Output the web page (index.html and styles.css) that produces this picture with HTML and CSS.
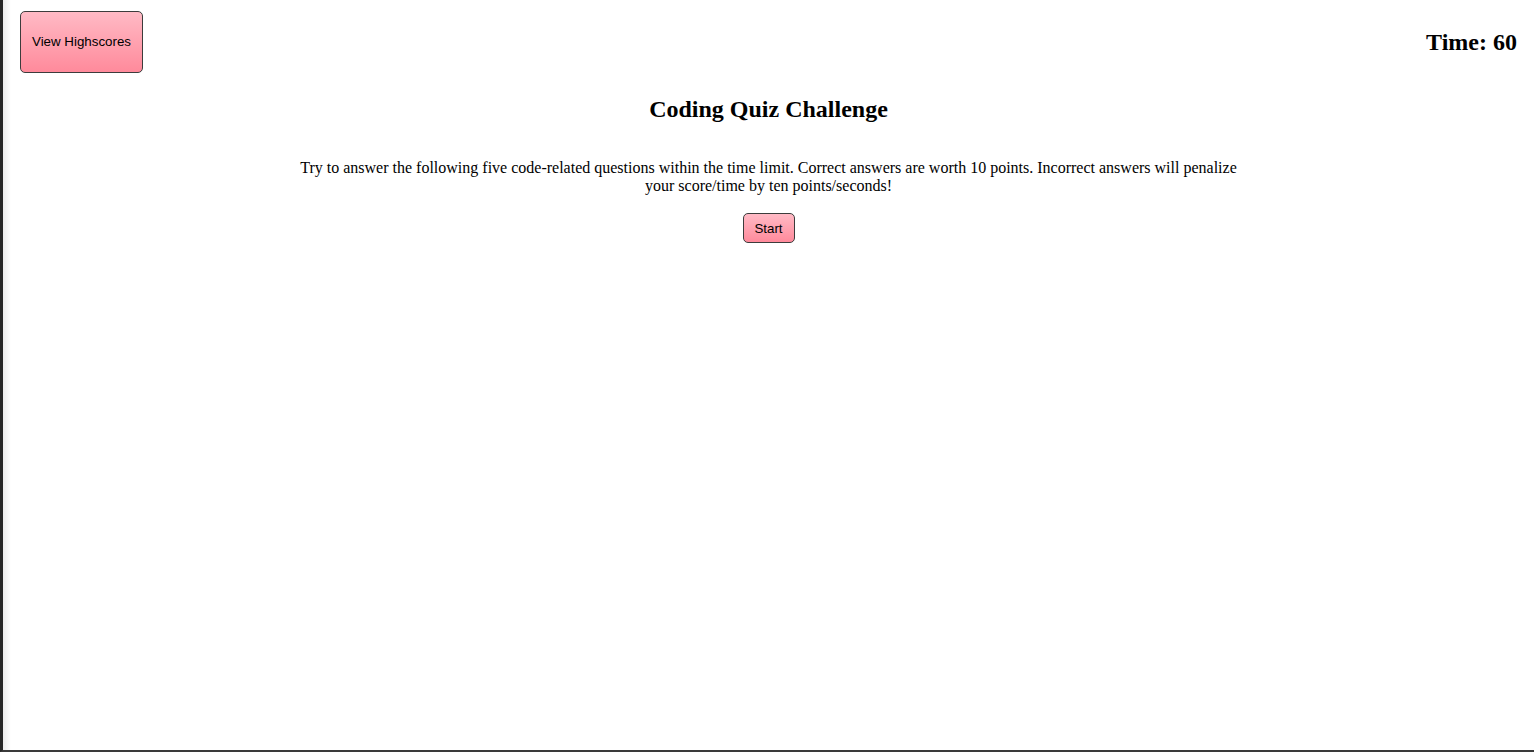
FILE: index.html
```html
<!DOCTYPE html>
<html>
<head>
<meta charset="utf-8">
<title>Coding Quiz</title>
<link rel="stylesheet" href="styles.css">
</head>
<body>
<div class="frame">
  <header class="top">
    <button class="btn btn-scores">View Highscores</button>
    <h2 class="timer">Time: 60</h2>
  </header>
  <main class="intro">
    <h2 class="title">Coding Quiz Challenge</h2>
    <p class="desc">Try to answer the following five code-related questions within the time limit. Correct answers are worth 10 points. Incorrect answers will penalize your score/time by ten points/seconds!</p>
    <button class="btn btn-start">Start</button>
  </main>
</div>
</body>
</html>
```
FILE: styles.css
```css
html, body {
  margin: 0;
  padding: 0;
  height: 100%;
  background: #fff;
}
body {
  font-family: "Liberation Serif", "Times New Roman", serif;
  color: #000;
  overflow: hidden;
}
.frame {
  box-sizing: border-box;
  height: 752px;
  border-left: 3px solid #262626;
  border-bottom: 2px solid #3a3a3a;
  position: relative;
}
.frame::before {
  content: "";
  position: absolute;
  left: 0;
  top: 0;
  bottom: 0;
  width: 8px;
  background: linear-gradient(to right, rgba(0,0,0,0.08), rgba(0,0,0,0));
  pointer-events: none;
}
.top {
  display: flex;
  justify-content: space-between;
  align-items: flex-start;
  padding: 11px 17px 0 17px;
}
.btn {
  font-family: "Liberation Sans", Arial, sans-serif;
  font-size: 13.33px;
  color: #000;
  background: linear-gradient(to bottom, #ffbac5, #ff8a9b);
  border: 1px solid #3c3c3c;
  border-radius: 5px;
  cursor: pointer;
}
.btn-scores {
  width: 123px;
  height: 62px;
  padding: 0 0 2px 0;
}
.timer {
  margin: 18px 0 0 0;
  font-size: 24px;
  font-weight: bold;
}
.intro {
  display: flex;
  flex-direction: column;
  align-items: center;
  text-align: center;
}
.title {
  margin: 23px 0 0 0;
  font-size: 24px;
  font-weight: bold;
}
.desc {
  max-width: 960px;
  margin: 36px 0 0 0;
  font-size: 16px;
  line-height: 18px;
}
.btn-start {
  margin-top: 18px;
  width: 52px;
  height: 30px;
  padding: 0;
}
```
